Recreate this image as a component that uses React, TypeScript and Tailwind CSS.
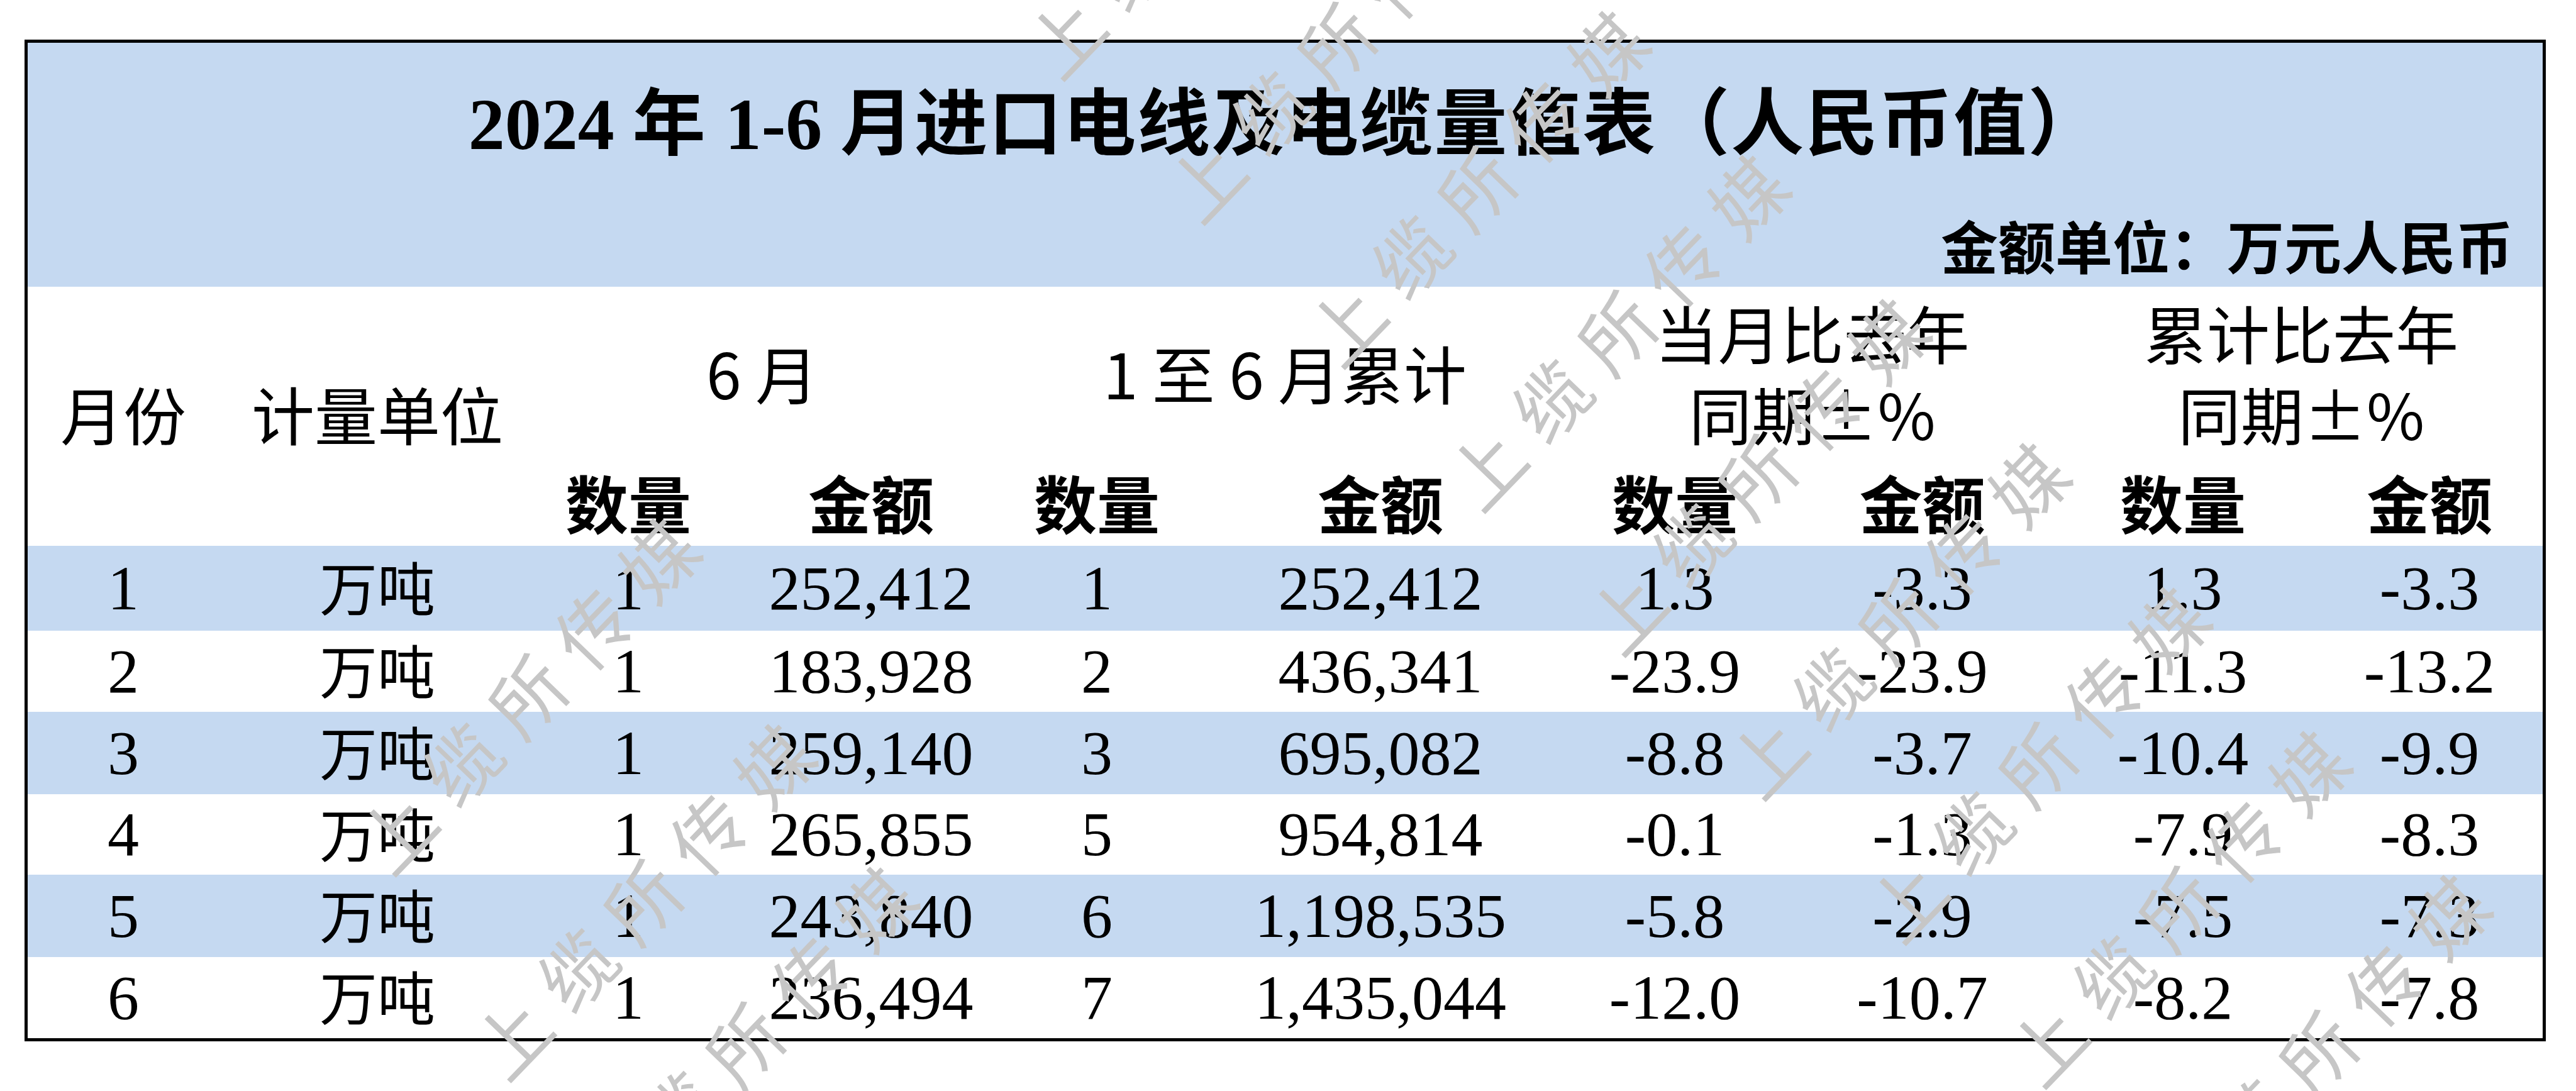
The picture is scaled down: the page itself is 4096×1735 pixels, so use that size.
import React from 'react';

const COLS =
  'grid grid-cols-[304px_478px_346px_426px_292px_598px_350px_437px_392px_376px]';
const SERIF = "font-['Liberation_Serif','Noto_Sans_CJK_SC',serif]";
const CJK = "font-['Noto_Sans_CJK_SC','Liberation_Sans',sans-serif]";

interface Row {
  month: string;
  qty: string;
  amount: string;
  cumQty: string;
  cumAmount: string;
  mQty: string;
  mAmount: string;
  cQty: string;
  cAmount: string;
  height: string;
  blue: boolean;
}

const rows: Row[] = [
  { month: '1', qty: '1', amount: '252,412', cumQty: '1', cumAmount: '252,412', mQty: '1.3', mAmount: '-3.3', cQty: '1.3', cAmount: '-3.3', height: 'h-[135px]', blue: true },
  { month: '2', qty: '1', amount: '183,928', cumQty: '2', cumAmount: '436,341', mQty: '-23.9', mAmount: '-23.9', cQty: '-11.3', cAmount: '-13.2', height: 'h-[129px]', blue: false },
  { month: '3', qty: '1', amount: '259,140', cumQty: '3', cumAmount: '695,082', mQty: '-8.8', mAmount: '-3.7', cQty: '-10.4', cAmount: '-9.9', height: 'h-[131px]', blue: true },
  { month: '4', qty: '1', amount: '265,855', cumQty: '5', cumAmount: '954,814', mQty: '-0.1', mAmount: '-1.3', cQty: '-7.9', cAmount: '-8.3', height: 'h-[128px]', blue: false },
  { month: '5', qty: '1', amount: '243,840', cumQty: '6', cumAmount: '1,198,535', mQty: '-5.8', mAmount: '-2.9', cQty: '-7.5', cAmount: '-7.3', height: 'h-[131px]', blue: true },
  { month: '6', qty: '1', amount: '236,494', cumQty: '7', cumAmount: '1,435,044', mQty: '-12.0', mAmount: '-10.7', cQty: '-8.2', cAmount: '-7.8', height: 'h-[129px]', blue: false },
];

// watermark "上缆所传媒", placed by the left end of each line
const marks = [
  'left-[1649px] top-[38px]',
  'left-[1872px] top-[267px]',
  'left-[2095px] top-[496px]',
  'left-[2318px] top-[725px]',
  'left-[2541px] top-[954px]',
  'left-[2764px] top-[1183px]',
  'left-[2987px] top-[1412px]',
  'left-[3210px] top-[1641px]',
  'left-[3433px] top-[1870px]',
  'left-[586px] top-[1303px]',
  'left-[769px] top-[1630px]',
  'left-[931px] top-[1857px]',
];

function Num({ children, className = '' }: { children: React.ReactNode; className?: string }) {
  return (
    <div className={`flex items-center justify-center ${SERIF} text-[100px] leading-none ${className}`}>
      {children}
    </div>
  );
}

function Head({ children, className = '' }: { children: React.ReactNode; className?: string }) {
  return (
    <div className={`flex items-center justify-center pb-[10px] ${CJK} text-[100px] leading-none ${className}`}>
      {children}
    </div>
  );
}

export default function App() {
  return (
    <div className="relative w-[4096px] h-[1735px] overflow-hidden bg-white text-black">
      <div className="pt-[63px] pl-[39px]">
        <div className="w-[4009px] border-[5px] border-black">
          {/* Title band */}
          <div className="h-[388px] bg-[#c5d9f1] flex flex-col">
            <div className={`pt-[72px] text-center text-[116px] leading-[116px] font-bold whitespace-nowrap ${SERIF}`}>
              2024 <span className="tracking-[2px]">年</span> 1-6{' '}
              <span className="tracking-[2px]">月进口电线及电缆量值表（人民币值）</span>
            </div>
            <div className={`mt-[87px] pr-[47px] text-right text-[91px] leading-[91px] font-bold ${CJK}`}>
              金额单位：万元人民币
            </div>
          </div>

          {/* Column headers */}
          <div className={`${COLS} grid-rows-[281px_131px] bg-white`}>
            <Head className="row-span-2">月份</Head>
            <Head className="row-span-2 pl-[26px]">计量单位</Head>
            <Head className="col-span-2">6 月</Head>
            <Head className="col-span-2">1 至 6 月累计</Head>
            <div className={`col-span-2 flex flex-col items-center justify-center pb-[10px] ${CJK} text-[100px] leading-[129px]`}>
              <div>当月比去年</div>
              <div>同期±%</div>
            </div>
            <div className={`col-span-2 flex flex-col items-center justify-center pb-[10px] ${CJK} text-[100px] leading-[129px]`}>
              <div>累计比去年</div>
              <div>同期±%</div>
            </div>
            <Head className="font-bold">数量</Head>
            <Head className="font-bold">金额</Head>
            <Head className="font-bold">数量</Head>
            <Head className="font-bold pl-[12px]">金额</Head>
            <Head className="font-bold">数量</Head>
            <Head className="font-bold">金额</Head>
            <Head className="font-bold">数量</Head>
            <Head className="font-bold pl-[16px]">金额</Head>
          </div>

          {/* Data rows */}
          {rows.map((r) => (
            <div key={r.month} className={`${COLS} ${r.height} ${r.blue ? 'bg-[#c5d9f1]' : 'bg-white'}`}>
              <Num>{r.month}</Num>
              <div className={`flex items-center justify-center pl-[26px] pb-[9px] ${CJK} text-[92px] leading-none`}>
                万吨
              </div>
              <Num>{r.qty}</Num>
              <Num>{r.amount}</Num>
              <Num>{r.cumQty}</Num>
              <Num className="pl-[12px]">{r.cumAmount}</Num>
              <Num>{r.mQty}</Num>
              <Num>{r.mAmount}</Num>
              <Num>{r.cQty}</Num>
              <Num className="pl-[16px]">{r.cAmount}</Num>
            </div>
          ))}
        </div>
      </div>

      {/* Watermark layer */}
      <div className="pointer-events-none absolute inset-0">
        {marks.map((pos, i) => (
          <span
            key={i}
            className={`absolute ${pos} origin-left -rotate-[46deg] whitespace-nowrap ${CJK} text-[118px] leading-none tracking-[32px] text-[#c6c6c6]`}
          >
            上缆所传媒
          </span>
        ))}
      </div>
    </div>
  );
}
